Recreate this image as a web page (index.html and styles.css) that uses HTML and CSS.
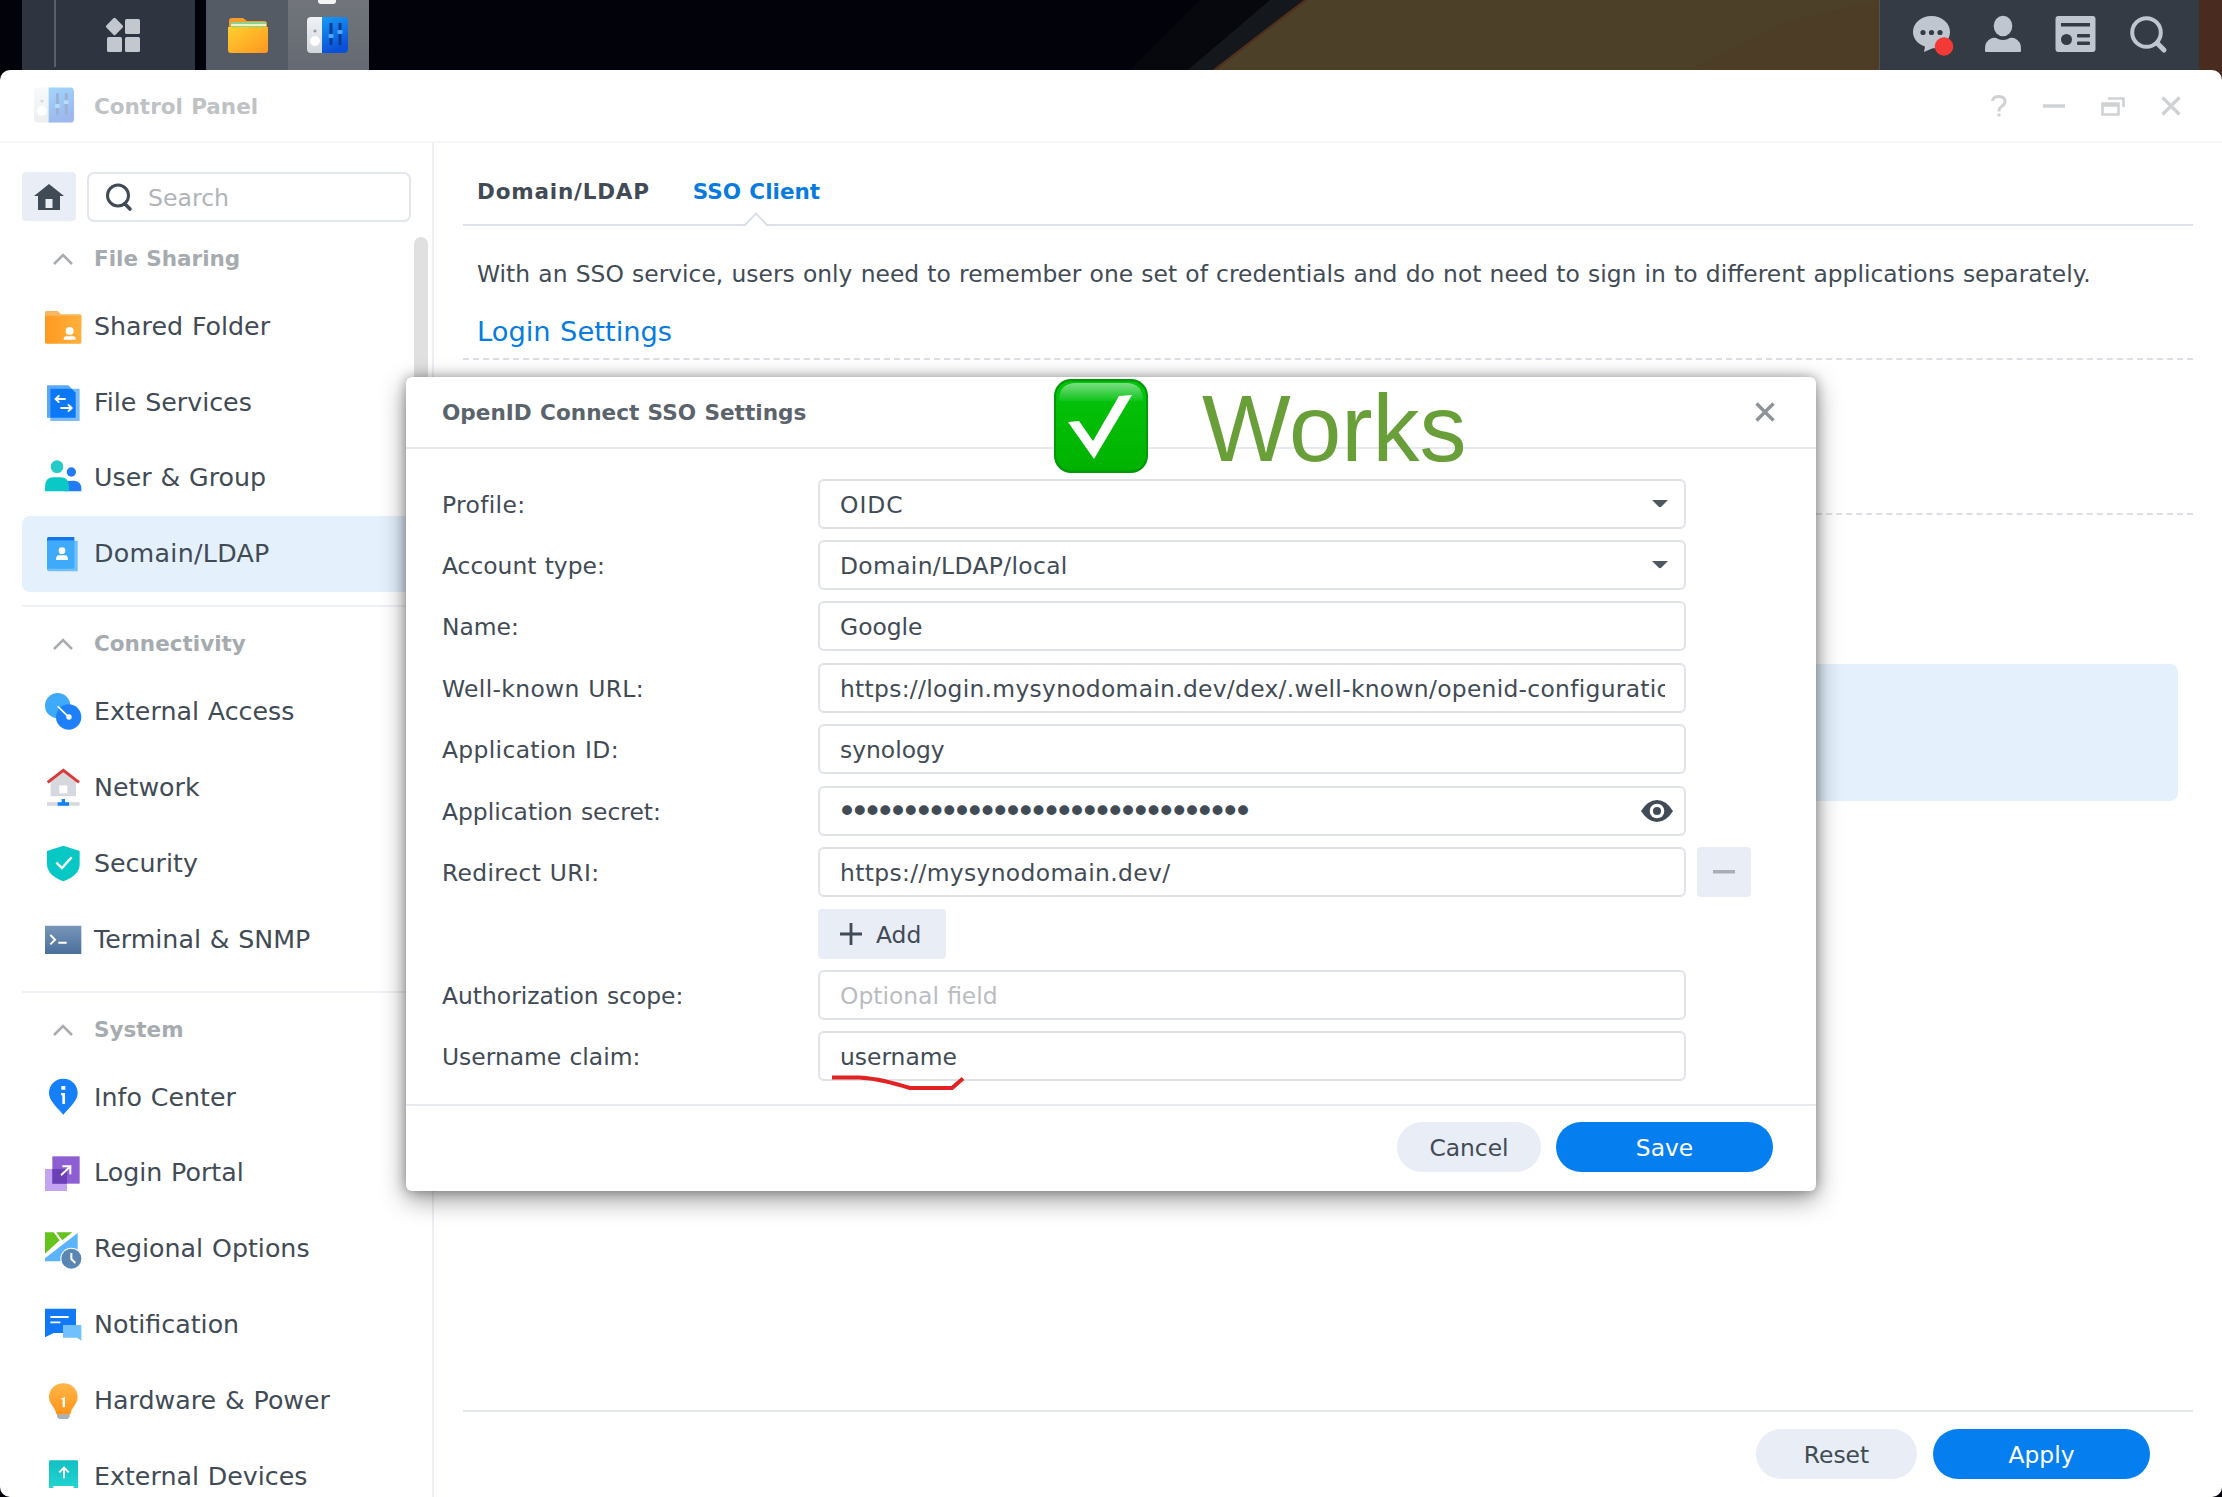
FILE: index.html
```html
<!DOCTYPE html>
<html lang="en">
<head>
<meta charset="utf-8">
<title>Control Panel</title>
<link rel="stylesheet" href="styles.css">
</head>
<body>
<svg class="defs" width="0" height="0">
  <defs>
    <linearGradient id="gFolder" x1="0" y1="0" x2="1" y2="1"><stop offset="0" stop-color="#ffd02e"/><stop offset="1" stop-color="#ff9620"/></linearGradient>
    <linearGradient id="gPanel" x1="0" y1="0" x2="0.3" y2="1"><stop offset="0" stop-color="#189af5"/><stop offset="1" stop-color="#0a4fd8"/></linearGradient>
    <linearGradient id="gWhite" x1="0" y1="0" x2="0" y2="1"><stop offset="0" stop-color="#f0f2f5"/><stop offset="1" stop-color="#d2d6dc"/></linearGradient>
    <linearGradient id="gShare" x1="0" y1="0" x2="1" y2="0"><stop offset="0" stop-color="#ff9a22"/><stop offset="1" stop-color="#ffb03a"/></linearGradient>
    <linearGradient id="gTerm" x1="0" y1="0" x2="0" y2="1"><stop offset="0" stop-color="#7896b8"/><stop offset="1" stop-color="#4a6f9c"/></linearGradient>
    <linearGradient id="gBulb" x1="0" y1="0" x2="0" y2="1"><stop offset="0" stop-color="#ffb648"/><stop offset="1" stop-color="#ff941a"/></linearGradient>
    <linearGradient id="gDev" x1="0" y1="0" x2="0" y2="1"><stop offset="0" stop-color="#12c0c4"/><stop offset="1" stop-color="#22d4d0"/></linearGradient>
    <linearGradient id="gCheck" x1="0" y1="0" x2="0" y2="1"><stop offset="0" stop-color="#04c40a"/><stop offset="1" stop-color="#00b200"/></linearGradient>
    <linearGradient id="gGloss" x1="0" y1="0" x2="0" y2="1"><stop offset="0" stop-color="#8fe39a"/><stop offset="1" stop-color="#10c41c"/></linearGradient>
    <symbol id="panel" viewBox="0 0 42 37">
      <rect x="0" y="0" width="24" height="36" rx="4" fill="url(#gWhite)"/>
      <path d="M15 0h22a4 4 0 0 1 4 4v28a4 4 0 0 1-4 4H15z" fill="url(#gPanel)"/>
      <circle cx="8" cy="14" r="1.6" fill="#9aa1ab"/><circle cx="8" cy="24" r="5" fill="#fff"/>
      <path d="M24 6v22M33 6v22" stroke="#0a3c96" stroke-width="3"/>
      <rect x="21.500" y="17" width="5" height="4" rx="1" fill="#49a9ff"/><rect x="30.500" y="13" width="5" height="4" rx="1" fill="#49a9ff"/>
    </symbol>
    <symbol id="chev" viewBox="0 0 20 12"><path d="M1 11 10 2l9 9" fill="none" stroke="#a9adb2" stroke-width="2.600"/></symbol>
    <symbol id="caret" viewBox="0 0 16 8"><path d="M0 0h16l-6.500 6.600q-1.500 1.400-3 0z" fill="#505860"/></symbol>
  </defs>
</svg>

<header class="taskbar">
  <svg class="wallpaper" viewBox="0 0 2222 80" preserveAspectRatio="none">
    <rect width="2222" height="80" fill="#02020a"/>
    <path d="M1200 0h100L1216 80h-96z" fill="#07080d"/>
    <path d="M1270 0h40L1216 80h-40z" fill="#14171b"/>
    <path d="M1306 0Q1266 30 1212 72V80H2222V0z" fill="#4d4029"/>
    <path d="M1306 0Q1266 30 1212 72" fill="none" stroke="#52301c" stroke-width="2.500"/>
    <path d="M1690 70 1790 20 1880 0V70z" fill="#4f3c24" opacity=".6"/>
    <path d="M2199 0h23v80h-23z" fill="#4a2b20"/>
  </svg>
  <div class="menu-block">
    <span class="edge"></span>
    <span class="menu-btn">
      <svg width="36" height="36" viewBox="0 0 36 36" fill="#c3c8cf"><rect x="3" y="3" width="13" height="13" rx="1.500" transform="rotate(45 9.500 9.500)"/><rect x="20" y="2" width="15" height="15" rx="1.500"/><rect x="2" y="20" width="15" height="15" rx="1.500"/><rect x="20" y="20" width="15" height="15" rx="1.500"/></svg>
    </span>
  </div>
  <div class="apps">
    <span class="app"><svg width="42" height="37" viewBox="0 0 42 37"><path d="M2 4a3 3 0 0 1 3-3h11l4 3h17a3 3 0 0 1 3 3v20H2z" fill="#f59a2c"/><path d="M4 5h35v10H4z" fill="#8fd08a"/><path d="M4 7h35v2H4z" fill="#e9f3c8"/><path d="M1 10h40v23a3 3 0 0 1-3 3H4a3 3 0 0 1-3-3z" fill="url(#gFolder)"/></svg></span>
    <span class="app active"><svg width="42" height="37"><use href="#panel"/></svg></span>
  </div>
  <div class="tray">
    <svg width="42" height="42" viewBox="0 0 42 42"><path d="M18.500 1C29 1 37 8 37 17S29 33 19 33.500L11 37l1-5.500C5 29 0 24 0 17 0 8 8 1 18.500 1z" fill="#c0c6d0"/><g fill="#343b44"><circle cx="10" cy="17.500" r="2.600"/><circle cx="18.500" cy="17.500" r="2.600"/><circle cx="27" cy="17.500" r="2.600"/></g><circle cx="31" cy="31.500" r="9.300" fill="#f43a36"/></svg>
    <svg class="person" width="38" height="42" viewBox="0 0 38 42" fill="#c0c6d0"><ellipse cx="19" cy="11" rx="9.300" ry="10.300"/><path d="M1 36q-1-10 7-13 4-1 6 1 5 2 10 0 2-2 6-1 8 3 7 13 0 1-1 1H2q-1 0-1-1z"/></svg>
    <svg class="widget" width="41" height="42" viewBox="0 0 41 42"><rect x=".5" y="1" width="40" height="36" rx="3" fill="#c0c6d0"/><g fill="#343b44"><rect x="6" y="8" width="29" height="3.500"/><circle cx="11.500" cy="24.500" r="5.500"/><rect x="22" y="19" width="13" height="3.500" rx="1"/><rect x="22" y="26.500" width="13" height="3.500" rx="1"/></g></svg>
    <svg class="find" width="37" height="42" viewBox="0 0 37 42" fill="none" stroke="#c0c6d0"><circle cx="16.500" cy="17.500" r="14.300" stroke-width="4"/><path d="m27 28 7 7" stroke-width="5" stroke-linecap="round"/></svg>
  </div>
</header>

<div class="window">
  <div class="titlebar">
    <svg class="faded" width="41" height="37"><use href="#panel"/></svg>
    <h1>Control Panel</h1>
    <div class="winbtns">
      <svg width="16" height="24" viewBox="0 0 16 24" fill="none" stroke="#cfd2d5" stroke-width="3"><path d="M1.500 7Q2 2.500 8 2.500q6 0 6 5 0 3-3.500 5Q8 14 8 17.500"/><path d="M8 19.500v3"/></svg>
      <svg width="22" height="24" viewBox="0 0 22 24"><path d="M0 12h22" stroke="#cfd2d5" stroke-width="3.500"/></svg>
      <svg width="24" height="24" viewBox="0 0 24 24" fill="none" stroke="#cfd2d5" stroke-width="2.600"><path d="M7 4.500h15.500V13"/><path d="M1.500 9.500h16v11h-16z"/><path d="M1.500 11h16" stroke-width="3.500"/></svg>
      <svg width="20" height="24" viewBox="0 0 20 24"><path d="m1.500 3.500 17 17m0-17-17 17" stroke="#cfd2d5" stroke-width="3.200"/></svg>
    </div>
  </div>

  <div class="body">
    <nav class="sidebar">
      <div class="searchrow">
        <span class="home"><svg width="30" height="26" viewBox="0 0 30 26"><path d="M15 0 30 12h-4v14H4V12H0zM11.500 15v9h7v-9z" fill="#414b55" fill-rule="evenodd"/></svg></span>
        <span class="search"><svg width="26" height="28" viewBox="0 0 26 28" fill="none" stroke="#414b55"><circle cx="12" cy="12.500" r="10.500" stroke-width="3"/><path d="m19 21 5 5" stroke-width="3.600" stroke-linecap="round"/></svg><span>Search</span></span>
      </div>
      <div class="scrollbar"></div>

      <section class="group">
        <h2><svg width="20" height="12"><use href="#chev"/></svg>File Sharing</h2>
        <a class="item"><svg class="ico" viewBox="0 0 108 108"><path d="M0 10q0-4 4-4h34l10 10h57q4 0 4 4v40H0z" fill="#f7b762"/><path d="M0 20h109v80q0 4-4 4H4q-4 0-4-4z" fill="url(#gShare)"/><circle cx="74" cy="66" r="12" fill="#fff"/><path d="M56 92q0-10 8-10h20q8 0 8 10z" fill="#fff"/></svg>Shared Folder</a>
        <a class="item"><svg class="ico" viewBox="0 0 108 108"><path d="M6 1h64l10 10v87H6z" fill="#5aa9f0"/><path d="M16 11h88v97H16z" fill="#7bbcf8"/><path d="M16 11h64l12 12v75H16z" fill="#0b78f7"/><path d="M62 42H32m11-11L32 42l11 11M46 69h34M69 58l11 11-11 11" fill="none" stroke="#fff" stroke-width="6"/></svg>File Services</a>
        <a class="item"><svg class="ico" viewBox="0 0 108 108"><circle cx="79" cy="36" r="14" fill="#237cf5"/><path d="M58 94V63q5-1 30-1 21 2 21 24v8z" fill="#237cf5"/><circle cx="36" cy="20" r="19" fill="#25cbc8"/><path d="M0 94V80q0-28 26-28h20q26 0 26 28v14z" fill="#0ac8c6"/></svg>User &amp; Group</a>
        <a class="item selected"><svg class="ico" viewBox="0 0 108 108"><path d="M6 16V8q0-5 5-5h77v16z" fill="#1277ee"/><path d="M6 14h92v92H12q-6 0-6-6z" fill="#6fc0fd"/><path d="M6 14h82v84H6z" fill="#3fa9fa"/><circle cx="51" cy="44" r="10" fill="#fff"/><path d="M33 72q0-14 8-14h20q8 0 8 14z" fill="#fff"/></svg><span class="spaced">Domain/LDAP</span></a>
      </section>

      <section class="group">
        <h2><svg width="20" height="12"><use href="#chev"/></svg>Connectivity</h2>
        <a class="item"><svg class="ico" viewBox="0 0 108 108"><circle cx="38" cy="35" r="38" fill="#3fa9fa"/><circle cx="71" cy="69" r="38" fill="#1e80f8"/><path d="m38 37 32 31" stroke="#fff" stroke-width="5"/><circle cx="72" cy="69" r="8" fill="#fff"/></svg>External Access</a>
        <a class="item"><svg class="ico" viewBox="0 0 108 108"><path d="M17 34 55 3l38 31v45H17z" fill="#d5d8dc"/><path d="M43 46h24v24H43z" fill="#fff"/><path d="M8 37 55 1l47 36" fill="none" stroke="#d93a3a" stroke-width="9"/><path d="M6 97h98v10H6z" fill="#d5d8dc"/><path d="M38 97h12V87h10v10h12v10H38z" fill="#1480f8"/></svg>Network</a>
        <a class="item"><svg class="ico" viewBox="0 0 108 108"><path d="M55-1 104 15v39q0 34-49 52Q6 88 6 54V15z" fill="#08c8c6"/><path d="m34 50 17 16 29-32" fill="none" stroke="#fff" stroke-width="7"/></svg>Security</a>
        <a class="item"><svg class="ico" viewBox="0 0 108 108"><path d="M0 11h109v85H0z" fill="url(#gTerm)"/><path d="m16 39 14 14-14 14M40 62h25" fill="none" stroke="#fff" stroke-width="6"/></svg>Terminal &amp; SNMP</a>
      </section>

      <section class="group">
        <h2><svg width="20" height="12"><use href="#chev"/></svg>System</h2>
        <a class="item"><svg class="ico" viewBox="0 0 108 108"><path d="M55-4C80-4 98 15 98 39c0 22-20 39-43 65C32 78 12 61 12 39 12 15 30-4 55-4z" fill="#1680fa"/><path d="M49 18h12v11H49zM48 39h12v33h-8V46h-4z" fill="#fff"/></svg>Info Center</a>
        <a class="item"><svg class="ico" viewBox="0 0 108 108"><path d="M0 42h66v66H0z" fill="#c4a4f0"/><path d="M22 4h82v82H22z" fill="#8d5fd3"/><path d="M22 42h44v44H22z" fill="#6a3fb8"/><path d="m48 61 26-25M52 34h24v24" fill="none" stroke="#fff" stroke-width="6"/></svg>Login Portal</a>
        <a class="item"><svg class="ico" viewBox="0 0 108 108"><path d="M0 4h26l18 24L0 68zM34 4h48L52 28z" fill="#66c21c"/><path d="M98 6v85H0V82z" fill="#5cb4fa"/><circle cx="79" cy="83" r="33" fill="#fff"/><circle cx="79" cy="83" r="30" fill="#5a86b4"/><path d="M79 66v18l12 12" fill="none" stroke="#fff" stroke-width="6"/></svg>Regional Options</a>
        <a class="item"><svg class="ico" viewBox="0 0 108 108"><path d="M0 5h93v73H26L0 91z" fill="#1179f6"/><path d="M54 54h55v47L96 92H54z" fill="#6fc0fd"/><path d="M16 30h55M16 46h30" stroke="#fff" stroke-width="5.500"/></svg>Notification</a>
        <a class="item"><svg class="ico" viewBox="0 0 108 108"><path d="M36 90h38v12l-6 6H42l-6-6z" fill="#a9b1ba"/><path d="M55 1C80 1 98 19 98 42c0 22-18 28-22 52H34C30 70 12 64 12 42 12 19 30 1 55 1z" fill="url(#gBulb)"/><path d="m47 48 13-7v32h-7V49z" fill="#fff"/></svg>Hardware &amp; Power</a>
        <a class="item"><svg class="ico" viewBox="0 0 108 108"><path d="M12 8q0-4 4-4h79q4 0 4 4v79H86v-6H25v6H12z" fill="url(#gDev)"/><path d="M57 58V26M43 40l14-14 14 14" fill="none" stroke="#fff" stroke-width="6"/></svg>External Devices</a>
      </section>
    </nav>

    <main class="main">
      <div class="tabs"><span class="off">Domain/LDAP</span><span class="on">SSO Client<svg class="notch" width="26" height="14" viewBox="0 0 26 14"><path d="M2 14 13 2l11 12z" fill="#fff"/><path d="M0 13h2L13 1.500 24 13h2" fill="none" stroke="#d9e0ea" stroke-width="2"/></svg></span></div>
      <p class="desc">With an SSO service, users only need to remember one set of credentials and do not need to sign in to different applications separately.</p>
      <h3>Login Settings</h3>
      <div class="rule"></div>
      <div class="notice"></div>
      <footer class="actions"><span class="btn reset">Reset</span><span class="btn primary">Apply</span></footer>
    </main>
  </div>
</div>

<div class="dialog">
  <div class="dlg-head"><h2>OpenID Connect SSO Settings</h2><svg width="20" height="20" viewBox="0 0 20 20"><path d="m1.500 1.500 17 17m0-17-17 17" stroke="#8d9399" stroke-width="3.400"/></svg></div>
  <div class="form">
    <label class="wide">Profile:</label><div class="field"><span class="caps">OIDC</span><svg width="16" height="8"><use href="#caret"/></svg></div>
    <label>Account type:</label><div class="field"><span class="wide">Domain/LDAP/local</span><svg width="16" height="8"><use href="#caret"/></svg></div>
    <label>Name:</label><div class="field"><span>Google</span></div>
    <label class="wide">Well-known URL:</label><div class="field"><span class="url">https://login.mysynodomain.dev/dex/.well-known/openid-configuration</span></div>
    <label class="wide">Application ID:</label><div class="field"><span>synology</span></div>
    <label>Application secret:</label><div class="field eye"><span class="dots">••••••••••••••••••••••••••••••••</span><svg width="32" height="22" viewBox="0 0 32 22"><path d="M0 11Q7 0 16 0t16 11q-7 11-16 11T0 11z" fill="#414b55"/><circle cx="16" cy="11" r="7.300" fill="#fff"/><circle cx="16" cy="11" r="4" fill="#414b55"/></svg></div>
    <label class="wide">Redirect URI:</label><div class="pair"><div class="field"><span class="wide">https://mysynodomain.dev/</span></div><span class="minus"><svg width="22" height="4"><rect width="22" height="3.500" fill="#a9adb5"/></svg></span></div>
    <label></label><div class="add"><svg width="22" height="22" viewBox="0 0 22 22"><path d="M11 0v22M0 11h22" stroke="#414b55" stroke-width="2.800"/></svg><span>Add</span></div>
    <label>Authorization scope:</label><div class="field hint"><span>Optional field</span></div>
    <label>Username claim:</label><div class="field"><span>username</span></div>
  </div>
  <div class="dlg-foot"><span class="btn cancel">Cancel</span><span class="btn primary">Save</span></div>
  <svg class="stroke" width="140" height="20" viewBox="0 0 140 20"><path d="M3 5.500 30 5.500q14 1 25 3.500t26 7h42l11-9.500" fill="none" stroke="#e02322" stroke-width="4"/></svg>
  <svg class="tick" width="94" height="94" viewBox="0 0 94 94"><rect width="94" height="94" rx="17" fill="#009a08"/><rect x="2" y="2.500" width="90" height="89" rx="15" fill="url(#gCheck)"/><path d="M5 22Q5 4 22 4h50q17 0 17 18z" fill="url(#gGloss)" opacity=".85"/><path d="m14 43 11-1 14 20L65 17l13-1-38 64z" fill="#fff"/></svg>
  <span class="works">Works</span>
</div>
</body>
</html>
```
FILE: styles.css
```css
* { box-sizing: border-box; }
html, body { height: 100%; }
body {
  margin: 0;
  position: relative;
  overflow: hidden;
  background: #02020a;
  color: #414b55;
  font: 23.4px/30px "DejaVu Sans", Verdana, sans-serif;
  word-spacing: 0.034em;
  display: flex;
  flex-direction: column;
}
h1, h2, h3, p { margin: 0; font-weight: normal; }
svg { display: block; flex: none; overflow: visible; }
.defs { position: absolute; }

.taskbar { position: relative; flex: none; height: 70px; display: flex; padding: 0 23px 0 22px; }
.wallpaper { position: absolute; left: 0; top: 0; width: 100%; height: 80px; }
.menu-block, .apps, .tray { position: relative; display: flex; }
.menu-block { width: 173px; background: #2f3540; }
.edge { width: 34px; height: 67px; border-right: 2px solid #58606a; }
.menu-btn { flex: 1; display: flex; align-items: center; justify-content: center; padding-right: 5px; }
.apps { margin-left: 11px; border-left: 1px solid #50565e; }
.app { width: 81px; display: flex; align-items: center; justify-content: center; background: #545b64; }
.app.active { background: linear-gradient(#71757b, #656a72); position: relative; padding-right: 2px; }
.app.active::before { content: ""; position: absolute; left: 30px; top: 0; width: 18px; height: 4px; background: #f4f4f4; border-radius: 0 0 3px 3px; }
.tray { margin-left: auto; width: 320px; padding: 15px 0 0 33px; background: #343b44; border-left: 1px solid #4a525c; }
.person { margin-left: 29px; }
.widget { margin-left: 33px; }
.find { margin-left: 34px; }

.window { position: relative; flex: 1; min-height: 0; display: flex; flex-direction: column; background: #fff; border-radius: 10px; overflow: hidden; }
.titlebar { flex: none; height: 73px; border-bottom: 2px solid #f5f6f7; display: flex; align-items: center; padding: 0 41px 0 34px; }
.titlebar h1 { margin-left: 19px; padding-top: 2px; font-size: 21.5px; font-weight: bold; color: #bfc2c5; }
.faded { opacity: .4; }
.winbtns { margin-left: auto; display: flex; gap: 36px; align-items: center; }
.body { flex: 1; min-height: 0; display: flex; }

.sidebar { position: relative; flex: none; width: 434px; border-right: 2px solid #eceff3; padding: 29px 0 0 22px; overflow: hidden; font-size: 25.3px; }
.searchrow { display: flex; gap: 11px; height: 50px; margin-bottom: 7px; }
.home { width: 54px; height: 49px; background: #e8edf6; border-radius: 4px; display: flex; align-items: center; justify-content: center; }
.search { width: 324px; border: 2px solid #e1e6ef; border-radius: 7px; display: flex; align-items: center; padding-left: 17px; gap: 16px; color: #b0b4b9; font-size: 23.6px; }
.search span { padding-top: 1px; }
.scrollbar { position: absolute; left: 414px; top: 94px; width: 14px; height: 600px; border-radius: 7px; background: #e0e0e0; }
.group { height: 378.400px; border-bottom: 2px solid #eef1f5; margin-bottom: 7px; }
.group:last-child { border: 0; }
.group h2 { height: 60px; display: flex; align-items: center; gap: 21px; padding-left: 31px; font-size: 21.5px; font-weight: bold; color: #a6abb0; }
.item { height: 75.800px; display: flex; align-items: center; gap: 13px; padding-left: 23px; }
.item.selected { background: #e4f0fc; border-radius: 8px; }
.spaced { letter-spacing: .3px; }
.ico { width: 36px; height: 36px; }

.main { flex: 1; min-width: 0; display: flex; flex-direction: column; padding: 0 29px 0 29px; }
.tabs { flex: none; height: 83px; border-bottom: 2px solid #dce2ea; display: flex; gap: 43px; padding: 34px 0 0 14px; font-size: 21.5px; font-weight: bold; }
.off { letter-spacing: .8px; }
.on { color: #087bdf; position: relative; }
.notch { position: absolute; left: 50%; bottom: -2px; margin-left: -13px; }
.desc { margin: 33px 0 0 14px; white-space: nowrap; }
h3 { margin: 28px 0 0 14px; font-size: 27.3px; color: #087bdf; }
.rule { margin-top: 11px; height: 157px; border: dashed #dcdfe3; border-width: 2px 0; }
.notice { flex: none; margin: 149px 15px 0 0; height: 137px; background: #e4f0fc; border-radius: 8px; }
.actions { margin-top: auto; height: 87px; border-top: 2px solid #e4e8ee; padding: 17px 43px 0 0; display: flex; gap: 16px; justify-content: flex-end; }
.btn { height: 50px; border-radius: 25px; display: flex; align-items: center; justify-content: center; background: #e8edf6; padding-top: 2px; }
.btn.primary { width: 217px; background: #057ff0; color: #fff; }
.reset { width: 161px; }
.cancel { width: 144px; }

.dialog { position: absolute; left: 406px; top: 377px; width: 1410px; height: 814px; background: #fff; border-radius: 6px; box-shadow: 0 8px 26px rgba(0,0,0,.42), 0 0 12px rgba(0,0,0,.3); display: flex; flex-direction: column; }
.dlg-head { height: 72px; flex: none; border-bottom: 2px solid #e6e9ed; display: flex; align-items: center; justify-content: space-between; padding: 0 41px 0 36px; }
.dlg-head h2 { font-size: 21.6px; font-weight: bold; color: #5b636c; padding-top: 1px; }
.form { display: grid; grid-template-columns: 376px 1fr; grid-auto-rows: 50px; row-gap: 11.450px; align-items: center; padding: 29.500px 0 0 36px; }
.form label, .field span, .add span { padding-top: 2px; }
.field { width: 868px; height: 50px; border: 2px solid #dfe3e9; border-radius: 6px; display: flex; align-items: center; justify-content: space-between; padding: 0 16px 0 20px; }
.field.eye { padding-right: 11px; }
.wide { letter-spacing: .35px; }
.caps { letter-spacing: 1px; }
.url { width: 825px; overflow: hidden; white-space: nowrap; letter-spacing: .29px; }
.field .dots { font-size: 34px; letter-spacing: -7.280px; margin-left: -3px; padding-top: 0; }
.hint { color: #b9bdc2; }
.pair { display: flex; gap: 11px; }
.minus { width: 54px; height: 50px; background: #e8edf6; border-radius: 4px; display: flex; align-items: center; justify-content: center; }
.add { width: 128px; height: 50px; background: #e8edf6; border-radius: 4px; display: flex; align-items: center; gap: 14px; padding-left: 22px; }
.dlg-foot { margin-top: auto; height: 87px; border-top: 2px solid #e6e9ed; padding: 16px 43px 0 0; display: flex; gap: 15px; justify-content: flex-end; }
.stroke { position: absolute; left: 423px; top: 695px; }
.tick { position: absolute; left: 648px; top: 2px; }
.works { position: absolute; left: 796px; top: -2px; font: 94px/108px "Liberation Sans", Arial, sans-serif; color: #689f38; }
```
